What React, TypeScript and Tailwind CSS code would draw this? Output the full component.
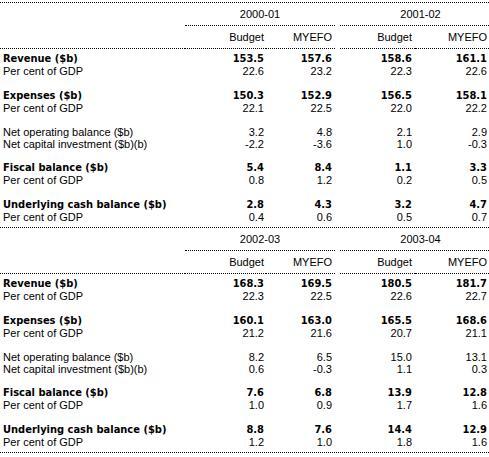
import React from "react";

type Row =
  | { kind: "data"; label: string; bold?: boolean; v: string[] }
  | { kind: "sp"; h: string };

const tables: { years: [string, string]; rows: Row[] }[] = [
  {
    years: ["2000-01", "2001-02"],
    rows: [
      { kind: "data", label: "Revenue ($b)", bold: true, v: ["153.5", "157.6", "158.6", "161.1"] },
      { kind: "data", label: "Per cent of GDP", v: ["22.6", "23.2", "22.3", "22.6"] },
      { kind: "sp", h: "h-[13px]" },
      { kind: "data", label: "Expenses ($b)", bold: true, v: ["150.3", "152.9", "156.5", "158.1"] },
      { kind: "data", label: "Per cent of GDP", v: ["22.1", "22.5", "22.0", "22.2"] },
      { kind: "sp", h: "h-[12px]" },
      { kind: "data", label: "Net operating balance ($b)", v: ["3.2", "4.8", "2.1", "2.9"] },
      { kind: "data", label: "Net capital investment ($b)(b)", v: ["-2.2", "-3.6", "1.0", "-0.3"] },
      { kind: "sp", h: "h-[12px]" },
      { kind: "data", label: "Fiscal balance ($b)", bold: true, v: ["5.4", "8.4", "1.1", "3.3"] },
      { kind: "data", label: "Per cent of GDP", v: ["0.8", "1.2", "0.2", "0.5"] },
      { kind: "sp", h: "h-[13px]" },
      { kind: "data", label: "Underlying cash balance ($b)", bold: true, v: ["2.8", "4.3", "3.2", "4.7"] },
      { kind: "data", label: "Per cent of GDP", v: ["0.4", "0.6", "0.5", "0.7"] },
    ],
  },
  {
    years: ["2002-03", "2003-04"],
    rows: [
      { kind: "data", label: "Revenue ($b)", bold: true, v: ["168.3", "169.5", "180.5", "181.7"] },
      { kind: "data", label: "Per cent of GDP", v: ["22.3", "22.5", "22.6", "22.7"] },
      { kind: "sp", h: "h-[13px]" },
      { kind: "data", label: "Expenses ($b)", bold: true, v: ["160.1", "163.0", "165.5", "168.6"] },
      { kind: "data", label: "Per cent of GDP", v: ["21.2", "21.6", "20.7", "21.1"] },
      { kind: "sp", h: "h-[12px]" },
      { kind: "data", label: "Net operating balance ($b)", v: ["8.2", "6.5", "15.0", "13.1"] },
      { kind: "data", label: "Net capital investment ($b)(b)", v: ["0.6", "-0.3", "1.1", "0.3"] },
      { kind: "sp", h: "h-[12px]" },
      { kind: "data", label: "Fiscal balance ($b)", bold: true, v: ["7.6", "6.8", "13.9", "12.8"] },
      { kind: "data", label: "Per cent of GDP", v: ["1.0", "0.9", "1.7", "1.6"] },
      { kind: "sp", h: "h-[13px]" },
      { kind: "data", label: "Underlying cash balance ($b)", bold: true, v: ["8.8", "7.6", "14.4", "12.9"] },
      { kind: "data", label: "Per cent of GDP", v: ["1.2", "1.0", "1.8", "1.6"] },
    ],
  },
];

const cols = "grid grid-cols-[185px_81px_69px_5px_75px_74px]";
const dot = "border-b border-dotted border-black";
const regular = "font-['Liberation_Sans',Arial,sans-serif] font-normal";
const bold = "font-['DejaVu_Sans_Condensed','DejaVu_Sans',sans-serif] font-bold";

function Table({ years, rows }: { years: [string, string]; rows: Row[] }) {
  return (
    <div className={dot}>
      <div className={`${cols} h-[23px]`}>
        <div />
        <div className={`col-span-2 ${dot} flex items-center justify-center`}>{years[0]}</div>
        <div />
        <div className={`col-span-2 ${dot} flex items-center justify-center pl-[12px]`}>{years[1]}</div>
      </div>
      <div className={`${cols} h-[23px]`}>
        <div className={dot} />
        <div className={`${dot} flex items-center justify-end pr-[2px]`}>Budget</div>
        <div className={`${dot} flex items-center justify-end pr-[3px]`}>MYEFO</div>
        <div />
        <div className={`${dot} flex items-center justify-end pr-[3px]`}>Budget</div>
        <div className={`${dot} flex items-center justify-end pr-[2px]`}>MYEFO</div>
      </div>
      <div className="pt-[4px] pb-[4px]">
        {rows.map((r, i) =>
          r.kind === "sp" ? (
            <div key={i} className={r.h} />
          ) : (
            <div key={i} className={`${cols} h-[12px] leading-[12px] ${r.bold ? bold : regular}`}>
              <div className="pl-[3px] whitespace-nowrap">{r.label}</div>
              <div className="text-right pr-[2px]">{r.v[0]}</div>
              <div className="text-right pr-[3px]">{r.v[1]}</div>
              <div />
              <div className="text-right pr-[3px]">{r.v[2]}</div>
              <div className="text-right pr-[2px]">{r.v[3]}</div>
            </div>
          )
        )}
      </div>
    </div>
  );
}

export default function App() {
  return (
    <div className={`w-[489px] h-[457px] bg-white text-black text-[11px] pt-[2px] ${regular}`}>
      <div className="border-t border-dotted border-black">
        {tables.map((t, i) => (
          <Table key={i} years={t.years} rows={t.rows} />
        ))}
      </div>
    </div>
  );
}
